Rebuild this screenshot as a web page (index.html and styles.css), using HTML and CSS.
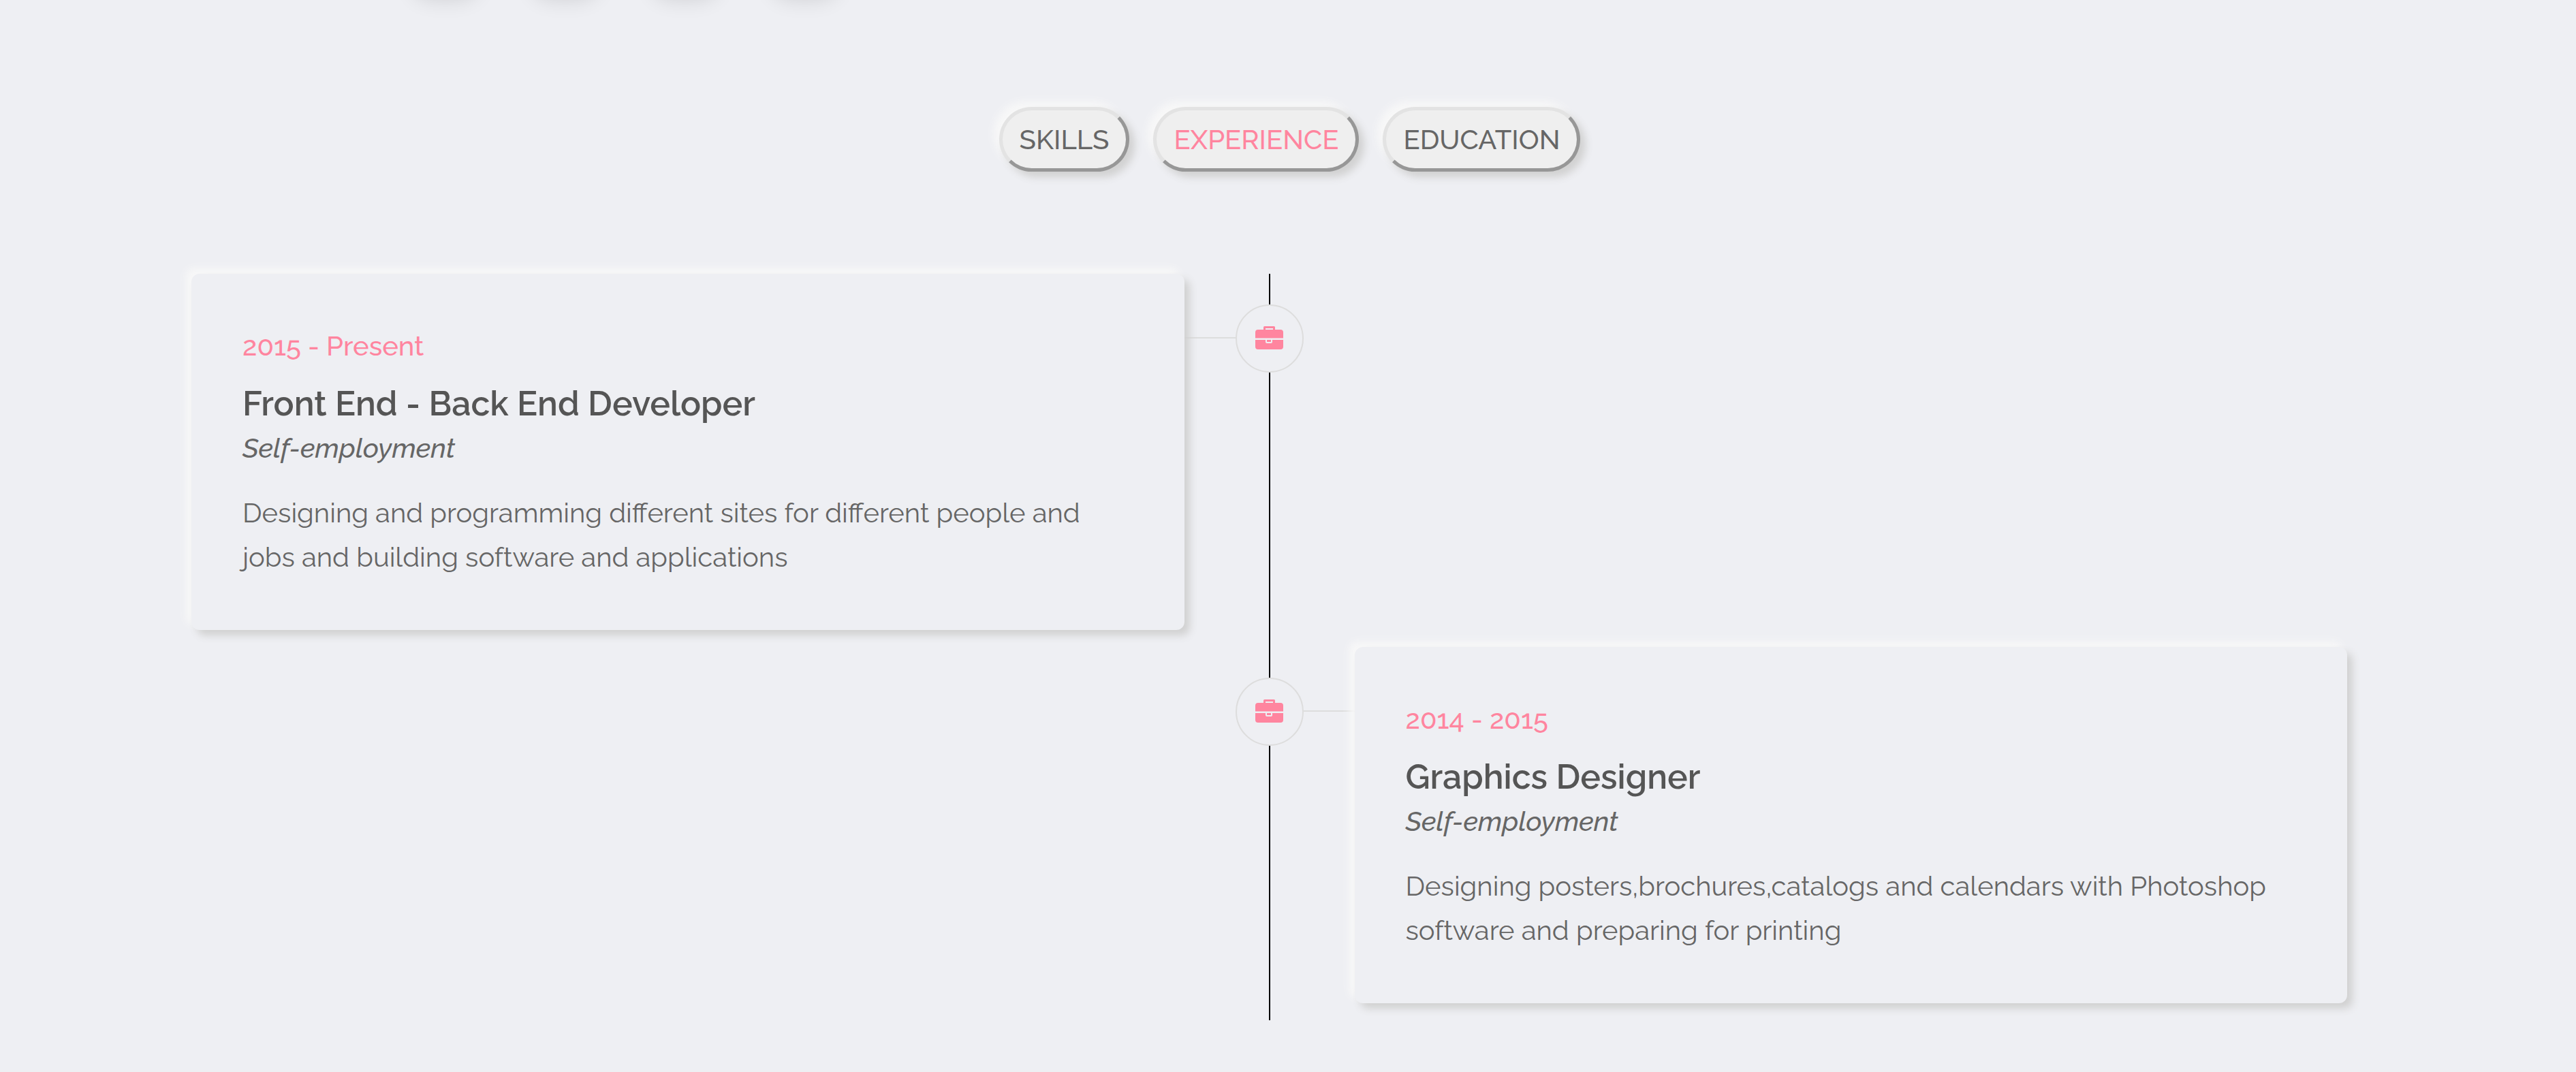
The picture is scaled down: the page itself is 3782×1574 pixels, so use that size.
FILE: index.html
```
<!DOCTYPE html>
<html lang="en">
<head>
<meta charset="utf-8">
<title>Experience</title>
<link rel="stylesheet" href="styles.css">
</head>
<body>
<div class="social" aria-hidden="true"><span class="dot"></span><span class="dot"></span><span class="dot"></span><span class="dot"></span></div>
<main>
  <nav class="tabs">
    <button class="tab" type="button">SKILLS</button>
    <button class="tab active" type="button">EXPERIENCE</button>
    <button class="tab" type="button">EDUCATION</button>
  </nav>
  <section class="timeline">
    <article class="item">
      <div class="card">
        <p class="date">2015 - Present</p>
        <h2 class="title">Front End - Back End Developer</h2>
        <p class="place">Self-employment</p>
        <p class="text">Designing and programming different sites for different people and jobs and building software and applications</p>
      </div>
      <div class="axis">
        <span class="badge"><svg class="icon" viewBox="1 1 42 36"><path fill-rule="evenodd" d="M13 6V2.500Q13 1 14.500 1H28.500Q30 1 30 2.500V6H38Q42 6 42 10V18.500H1V10Q1 6 5 6ZM16 6H27V4H16ZM1 21H16V24Q16 26 18 26H24Q26 26 26 24V21H42V31Q42 35 38 35H5Q1 35 1 31ZM18 21H24V24H18Z"/></svg></span>
      </div>
    </article>
    <article class="item right">
      <div class="card">
        <p class="date">2014 - 2015</p>
        <h2 class="title">Graphics Designer</h2>
        <p class="place">Self-employment</p>
        <p class="text">Designing posters,brochures,catalogs and calendars with Photoshop software and preparing for printing</p>
      </div>
      <div class="axis">
        <span class="badge"><svg class="icon" viewBox="1 1 42 36"><path fill-rule="evenodd" d="M13 6V2.500Q13 1 14.500 1H28.500Q30 1 30 2.500V6H38Q42 6 42 10V18.500H1V10Q1 6 5 6ZM16 6H27V4H16ZM1 21H16V24Q16 26 18 26H24Q26 26 26 24V21H42V31Q42 35 38 35H5Q1 35 1 31ZM18 21H24V24H18Z"/></svg></span>
      </div>
    </article>
  </section>
</main>
</body>
</html>
```
FILE: styles.css
```
* { box-sizing: border-box; }
body {
  margin: 0;
  background: #eeeff3;
  color: #666;
  font: 400 40px/65px Raleway, Lato, sans-serif;
}
p, h2 { margin: 0; }
.social {
  display: flex;
  gap: 76px;
  height: 110px;
  margin-top: -110px;
  padding: 0 0 10px 604px;
}
.dot {
  width: 100px;
  height: 100px;
  border-radius: 30px;
  box-shadow: 0 10px 30px rgba(0, 0, 0, 0.12);
}
.tabs {
  display: flex;
  justify-content: center;
  gap: 35px;
  padding: 157px 0 150px 5px;
}
.tab {
  height: 95px;
  padding: 0 25px;
  border: 5px solid;
  border-color: #e3e3e3 #979797 #979797 #e3e3e3;
  border-radius: 50px;
  background: #efefef;
  color: #666;
  font: inherit;
  font-weight: 500;
  line-height: 80px;
  box-shadow: 8px 8px 12px #d1d1d1, -8px -8px 12px #f8f8f8;
}
.tab.active { color: #ff859f; }
.timeline { padding: 0 336px 76px 281px; }
.item {
  display: grid;
  grid-template-columns: 1fr 250px 1fr;
}
.item + .item .card { grid-column: 3; }
.card {
  grid-row: 1;
  z-index: 1;
  margin-bottom: 25px;
  padding: 73px 75px 75px;
  border-radius: 12px;
  background: #eeeff3;
  box-shadow: 8px 8px 12px #d1d1d1, -8px -8px 12px #f8f8f8;
}
.date { color: #ff859f; font-weight: 500; }
.title {
  margin-top: 20px;
  color: #555;
  font-size: 50px;
  font-weight: 600;
  line-height: 65px;
}
.place { font-style: italic; font-weight: 500; }
.text { margin-top: 30px; font-weight: 400; }
.axis {
  display: grid;
  grid-row: 1;
  grid-column: 2;
  padding-top: 45px;
  background: linear-gradient(#ddd, #ddd) 0 93px / 50% 2px no-repeat;
}
.right .axis {
  background: linear-gradient(#ddd, #ddd) 100% 93px / 50% 2px no-repeat;
}
.axis::before {
  content: "";
  grid-area: 1 / 1;
  justify-self: center;
  width: 2px;
  margin-top: -45px;
  background: #000;
}
.badge {
  grid-area: 1 / 1;
  display: flex;
  align-items: center;
  justify-content: center;
  width: 100px;
  height: 100px;
  margin: 0 auto;
  border: 2px solid #ddd;
  border-radius: 50%;
  background: #eeeff3;
}
.icon {
  width: 42px;
  height: 36px;
  fill: #ff859f;
}
```
